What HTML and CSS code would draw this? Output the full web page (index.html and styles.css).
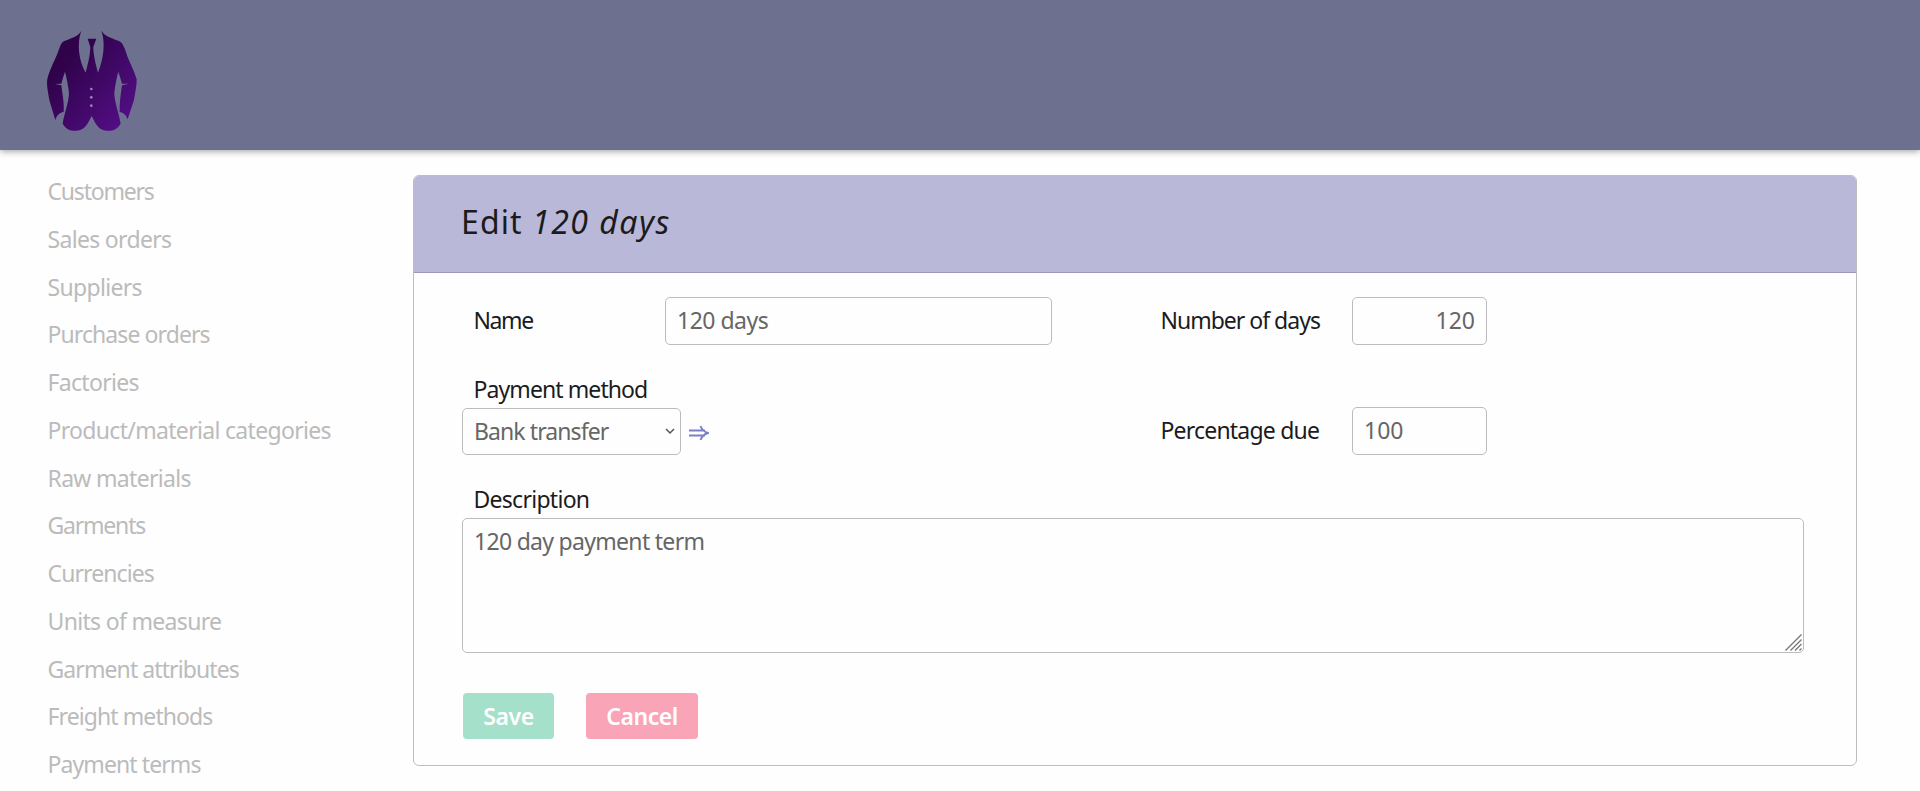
FILE: index.html
```html
<!DOCTYPE html>
<html lang="en">
<head>
<meta charset="utf-8">
<title>Edit payment term</title>
<link rel="stylesheet" href="styles.css">
</head>
<body>
<header class="topbar">
  <svg class="logo" viewBox="45 45 280 306" aria-hidden="true">
    <defs>
      <linearGradient id="suit" x1="0" y1="0" x2="1" y2="1">
        <stop offset="0.25" stop-color="#2f0249"/>
        <stop offset="0.9" stop-color="#530e86"/>
      </linearGradient>
    </defs>
    <path fill="url(#suit)" d="M154 47 C146 63 128 68 103 78 C94 82 91 92 87 103 C76 135 60 160 52 192 C49 210 54 230 58 255 L76 316 C79 301 90 292 101 291 C103 265 97 235 94 211 L75 207 L94 206 C97 194 101 182 105 170 C110 190 115 212 117 235 C116 265 103 295 98 326 C108 343 120 348 140 347 C165 346 173 326 185 303 C197 326 205 346 230 347 C250 348 262 343 272 326 C267 295 254 265 253 235 C255 212 260 190 265 170 C269 182 273 194 276 206 L297 206 L276 211 C273 235 268 265 269 291 C280 292 289 301 293 313 L312 255 C316 230 321 210 320 192 C310 160 294 135 285 103 C281 92 276 82 267 78 C242 68 224 63 214 47 C227 82 221 130 204 173 C198 152 190 120 190 96 L199 71 L173 71 L181 96 C181 120 173 150 167 173 C148 140 139 88 154 47 Z"/>
    <g fill="#9a86b5"><circle cx="184" cy="222" r="4"/><circle cx="184" cy="247" r="4"/><circle cx="184" cy="272" r="4"/></g>
  </svg>
</header>
<div class="page">
  <nav class="menu">
    <a class="snug">Customers</a>
    <a>Sales orders</a>
    <a>Suppliers</a>
    <a class="tight">Purchase orders</a>
    <a>Factories</a>
    <a>Product/material categories</a>
    <a>Raw materials</a>
    <a class="snug">Garments</a>
    <a class="tight">Currencies</a>
    <a>Units of measure</a>
    <a class="tight">Garment attributes</a>
    <a class="tight">Freight methods</a>
    <a class="tight">Payment terms</a>
  </nav>
  <main class="card">
    <h1 class="card-title">Edit <em>120 days</em></h1>
    <form class="form">
      <div class="row">
        <label class="label name-label" for="name">Name</label>
        <input class="field name" id="name" value="120 days">
        <label class="label side-label days-label" for="days">Number of days</label>
        <input class="field small right" id="days" value="120">
      </div>
      <div class="row row-method">
        <div class="stack">
          <label class="label tight">Payment method</label>
          <div class="method">
            <div class="field select tight"><span>Bank transfer</span>
              <svg class="chevron" viewBox="0 0 10 7"><path d="M1 1l4 4 4-4"/></svg>
            </div>
            <svg class="arrow" viewBox="0 0 20 16"><path d="M0 5.500h16M0 10.500h16M11.500 1C13 5 15.500 7 19 8C15.500 9 13 11 11.500 15"/></svg>
          </div>
        </div>
        <label class="label side-label due-label" for="due">Percentage due</label>
        <input class="field small" id="due" value="100">
      </div>
      <label class="label desc-label">Description</label>
      <div class="field area"><span>120 day payment term</span>
        <svg class="grip" viewBox="0 0 17 17"><path d="M.5 16.500l16-16M5.500 16.500l11-11M10 16.500l6.500-6.500M14.500 16.500l2-2"/></svg>
      </div>
      <div class="actions">
        <button type="button" class="btn save">Save</button>
        <button type="button" class="btn cancel">Cancel</button>
      </div>
    </form>
  </main>
</div>
</body>
</html>
```
FILE: styles.css
```css
* { box-sizing: border-box; }
body {
  margin: 0;
  height: 791px;
  overflow: hidden;
  background: #fefefe;
  color: #1b1b1d;
  font: 23px/32px "Noto Sans", sans-serif;
}
.tight { letter-spacing: -.91px; }
.snug { letter-spacing: -1.2px; }
.topbar {
  height: 150px;
  padding: 30px 0 0 45px;
  background: #6e7090;
  box-shadow: 0 1px 7px rgba(0, 0, 0, .4);
}
.logo { display: block; width: 93.3px; height: 102px; }
.page { display: flex; align-items: flex-start; }
.menu {
  width: 413px;
  padding: 18px 0 0 47.5px;
  display: flex;
  flex-direction: column;
  color: #bbb;
  letter-spacing: -.68px;
}
.menu a { height: 47.75px; line-height: 47.75px; white-space: nowrap; }
.card {
  width: 1444px;
  height: 591px;
  margin-top: 25px;
  border: 1px solid #bebebe;
  border-radius: 6px;
  overflow: hidden;
}
.card-title {
  margin: 0;
  height: 97px;
  padding-left: 47px;
  border-bottom: 1px solid #9c96bd;
  background: #bab8d8;
  font-size: 32px;
  font-weight: 400;
  line-height: 92px;
  letter-spacing: 1.1px;
}
.card-title em { letter-spacing: 1.5px; }
.form { padding: 24px 52px 0 48px; }
.row { display: flex; align-items: center; height: 48px; }
.row-method { align-items: flex-end; height: 110px; }
.label { padding-left: 11.5px; display: block; margin-top: -1px; padding-bottom: 1px; }
.name-label { width: 203px; letter-spacing: -1.4px; }
.days-label { letter-spacing: -1px; margin-left: 97px; }
.due-label { letter-spacing: -.8px; height: 41px; }
.side-label { width: 203px; }
.field {
  border: 1px solid #bcbcbc;
  border-radius: 5px;
  background: #fefefe;
  color: #666;
  font: inherit;
  padding: 0 11px;
}
input.field { padding: 0 11px 2px; }
.name { width: 387px; height: 48px; letter-spacing: -.5px; }
.small { width: 135px; height: 48px; }
.right { text-align: right; }
.stack { width: 687px; }
.method { display: flex; align-items: center; gap: 8px; margin-top: 2px; }
.select {
  width: 219px;
  height: 47px;
  display: flex;
  align-items: center;
  justify-content: space-between;
  padding: 0 5px 2px 11px;
}
.chevron { width: 10px; height: 7px; fill: none; stroke: #555; stroke-width: 1.5; margin-top: 2px; }
.arrow { width: 20px; height: 16px; fill: none; stroke: #7b7fc5; stroke-width: 1.9; margin-top: 2px; }
.desc-label { margin-top: 28px; letter-spacing: -.72px; }
.area {
  position: relative;
  height: 135px;
  margin-top: 2px;
  padding-top: 6px;
  letter-spacing: -.7px;
}
.grip {
  position: absolute;
  right: 1px;
  bottom: 1px;
  width: 17px;
  height: 17px;
  fill: none;
  stroke: #777;
  stroke-width: 1.3;
}
.actions { display: flex; gap: 32px; margin-top: 40px; padding-left: 1px; }
.btn {
  height: 46px;
  padding: 0;
  border: 0;
  border-radius: 4px;
  color: #fff;
  font: inherit;
  font-weight: 600;
  letter-spacing: -.45px;
}
.save { width: 91px; background: #a5e0cb; }
.cancel { width: 112px; background: #f9a5b7; }
```
